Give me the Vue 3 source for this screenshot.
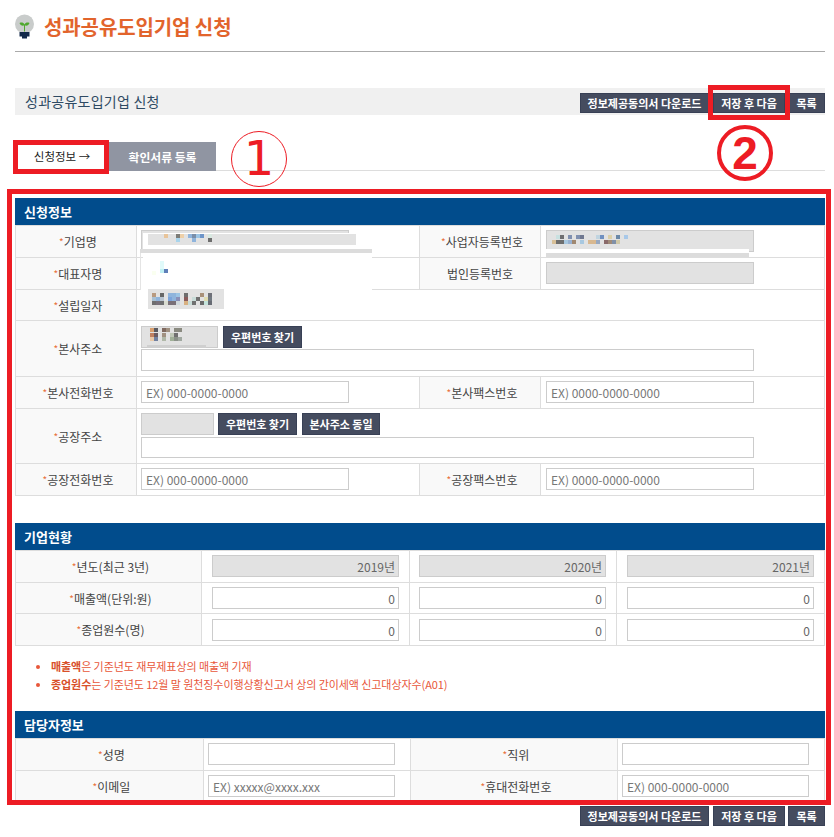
<script setup>
const mosaic = [
  // company name
  [164,234,'#e8c49a'],[176,234,'#7d7d78'],[180,234,'#eed0a8'],[188,234,'#8fb4dc'],[192,234,'#7a8ea8'],[196,234,'#9cc4e4'],[200,234,'#6e95c8'],[208,234,'#d8e8e0'],
  [176,238,'#a8d4ec'],[192,238,'#8fb4dc'],[208,238,'#6e6e6e'],
  // representative
  [160,261,'#e0fafa'],[160,265,'#e0fafa'],[160,269,'#c0f0f4'],[164,269,'#5f7fb8'],[152,271,'#fafff0'],
  // founding date
  [152,293,'#b89a80'],[160,293,'#666666'],[168,293,'#8fb4dc'],[172,293,'#8fb4dc'],[176,293,'#9cc4e4'],[184,293,'#6e6e6e'],[200,293,'#a89078'],[208,293,'#6e7078'],
  [152,297,'#a8c0d4'],[156,297,'#8fb4dc'],[160,297,'#b8c4d0'],[168,297,'#7ba4dc'],[172,297,'#8fb4dc'],[176,297,'#8a8fb8'],[184,297,'#8a5a5a'],[192,297,'#c8dcd8'],[196,297,'#707070'],[204,297,'#e0dcb0'],[208,297,'#707880'],
  [152,301,'#6e6e70'],[156,301,'#77707a'],[160,301,'#6e6e70'],[164,301,'#d8dcd0'],[168,301,'#7a7078'],[172,301,'#7a7078'],[176,301,'#d0d8dc'],[184,301,'#d8b080'],[188,301,'#c8dcd8'],[192,301,'#707070'],[200,301,'#6a6a6a'],[204,301,'#c4e4dc'],[208,301,'#686c74'],
  // business number
  [556,235,'#c8e0e0'],[560,235,'#6e6e70'],[568,235,'#8090b0'],[576,235,'#8090b0'],[580,235,'#707890'],[596,235,'#c0d4e0'],[600,235,'#7090c0'],[608,235,'#dcd0a8'],[616,235,'#6a88a8'],[624,235,'#a8c8e8'],
  [552,240,'#d8c098'],[556,240,'#6e6e6e'],[560,240,'#6e6e6e'],[564,240,'#a8c8e0'],[568,240,'#98b0d0'],[572,240,'#a08870'],[580,240,'#a8c8e0'],[588,240,'#d8b890'],[592,240,'#d8b890'],[596,240,'#98a8c0'],[604,240,'#8a6a6a'],[608,240,'#a08a78'],[612,240,'#8090a8'],[616,240,'#d0c8a8'],
  // zip
  [150,328,'#d8a070'],[154,328,'#5a5a60'],[162,328,'#806a60'],[166,328,'#a09080'],[174,328,'#8a8a80'],[178,328,'#8a8a80'],
  [150,333,'#c08060'],[154,333,'#6a5a60'],[162,333,'#a09080'],[170,333,'#c0c8b8'],[174,333,'#707070'],
  [150,337,'#e8c8a8'],[154,337,'#7080a0'],[162,337,'#b0b8a8'],[170,337,'#a0b098'],[174,337,'#8a9088'],[178,337,'#a0a8a0'],
]
</script>

<template>
  <div class="page">
    <header class="title-row">
      <svg class="bulb" width="22" height="26" viewBox="0 0 22 26">
        <g transform="translate(-1 0)">
          <circle cx="10.5" cy="10" r="9.5" fill="#c9cccb" />
          <path d="M6 17h9v3H6z" fill="#c9cccb" />
          <path d="M5.5 9c2 -1 4 -.5 5 1.5c1 -2 3 -2.5 5 -1.5c-.5 2 -2.5 3 -4.500 2.500v6h-1v-6c-2 .5 -4 -.5 -4.500 -2.500z" fill="#4fa82e" />
          <path d="M5.500 18h10v4.500h-2.500v2h-5v-2h-2.500z" fill="#12294a" />
        </g>
      </svg>
      <h1>성과공유도입기업 신청</h1>
    </header>

    <div class="bar">
      <span class="bar-title">성과공유도입기업 신청</span>
      <div class="actions">
        <button class="btn w1">정보제공동의서 다운로드</button>
        <button class="btn w2">저장 후 다음</button>
        <button class="btn w3">목록</button>
      </div>
    </div>

    <nav class="tabs">
      <span class="tab on">신청정보 →</span>
      <span class="tab off">확인서류 등록</span>
    </nav>

    <h2 class="sec first">신청정보</h2>
    <div class="grid g1">
      <div class="lb"><i>*</i>기업명</div>
      <div class="vl"><input class="f w208 ro" readonly /></div>
      <div class="lb"><i>*</i>사업자등록번호</div>
      <div class="vl r"><input class="f w208 ro" readonly /></div>

      <div class="lb"><i>*</i>대표자명</div>
      <div class="vl"></div>
      <div class="lb">법인등록번호</div>
      <div class="vl r"><input class="f w208 ro" readonly /></div>

      <div class="lb"><i>*</i>설립일자</div>
      <div class="vl span3"></div>

      <div class="lb"><i>*</i>본사주소</div>
      <div class="vl span3 addr">
        <div class="line">
          <input class="f w77 ro" readonly />
          <button class="btn fb">우편번호 찾기</button>
        </div>
        <input class="f w613" />
      </div>

      <div class="lb"><i>*</i>본사전화번호</div>
      <div class="vl"><input class="f w208" placeholder="EX) 000-0000-0000" /></div>
      <div class="lb"><i>*</i>본사팩스번호</div>
      <div class="vl r"><input class="f w208" placeholder="EX) 0000-0000-0000" /></div>

      <div class="lb"><i>*</i>공장주소</div>
      <div class="vl span3 addr addr2">
        <div class="line">
          <input class="f w73 ro" readonly />
          <button class="btn fb">우편번호 찾기</button>
          <button class="btn fb2">본사주소 동일</button>
        </div>
        <input class="f w613 short" />
      </div>

      <div class="lb"><i>*</i>공장전화번호</div>
      <div class="vl"><input class="f w208" placeholder="EX) 000-0000-0000" /></div>
      <div class="lb"><i>*</i>공장팩스번호</div>
      <div class="vl r"><input class="f w208" placeholder="EX) 0000-0000-0000" /></div>
    </div>

    <h2 class="sec second">기업현황</h2>
    <div class="grid g2">
      <div class="lb"><i>*</i>년도(최근 3년)</div>
      <div class="vc"><input class="f w187 ro num" readonly value="2019년" /></div>
      <div class="vc"><input class="f w187 ro num" readonly value="2020년" /></div>
      <div class="vc"><input class="f w187 ro num" readonly value="2021년" /></div>

      <div class="lb"><i>*</i>매출액(단위:원)</div>
      <div class="vc"><input class="f w187 num" value="0" /></div>
      <div class="vc"><input class="f w187 num" value="0" /></div>
      <div class="vc"><input class="f w187 num" value="0" /></div>

      <div class="lb"><i>*</i>종업원수(명)</div>
      <div class="vc"><input class="f w187 num" value="0" /></div>
      <div class="vc"><input class="f w187 num" value="0" /></div>
      <div class="vc"><input class="f w187 num" value="0" /></div>
    </div>

    <ul class="notes">
      <li><b>매출액</b>은 기준년도 재무제표상의 <b class="soft">매출액</b> 기재</li>
      <li><b>종업원수</b>는 기준년도 12월 말 원천징수이행상황신고서 상의 간이세액 신고대상자수(A01)</li>
    </ul>

    <h2 class="sec">담당자정보</h2>
    <div class="grid g3">
      <div class="lb"><i>*</i>성명</div>
      <div class="vl"><input class="f w187" /></div>
      <div class="lb"><i>*</i>직위</div>
      <div class="vl"><input class="f w187" /></div>

      <div class="lb"><i>*</i>이메일</div>
      <div class="vl"><input class="f w187" placeholder="EX) xxxxx@xxxx.xxx" /></div>
      <div class="lb"><i>*</i>휴대전화번호</div>
      <div class="vl"><input class="f w187" placeholder="EX) 000-0000-0000" /></div>
    </div>

    <div class="actions bottom">
      <button class="btn w1">정보제공동의서 다운로드</button>
      <button class="btn w2">저장 후 다음</button>
      <button class="btn w3">목록</button>
    </div>

    <!-- blurred-out personal data painted over the form -->
    <svg class="redact" width="834" height="837" viewBox="0 0 834 837">
      <rect x="143" y="233" width="229" height="57" fill="#fff" />
      <rect x="148" y="234" width="208" height="11" fill="#e2e2e2" />
      <rect x="140" y="249" width="232" height="4" fill="#dcdcdc" />
      <rect x="140" y="253" width="1" height="37" fill="#e4e4e4" />
      <rect x="141" y="289" width="7" height="24" fill="#fff" />
      <rect x="148" y="289" width="76" height="20" fill="#e2e2e2" />
      <rect x="546" y="249" width="203" height="4" fill="#fff" />
      <rect x="546" y="253" width="203" height="4" fill="#dcdcdc" />
      <rect x="147" y="345" width="59" height="3" fill="#cfcfcf" />
      <rect v-for="(m, i) in mosaic" :key="i" :x="m[0]" :y="m[1]" width="4" height="4" :fill="m[2]" />
    </svg>

    <!-- annotations -->
    <div class="mark m-tab"></div>
    <div class="mark m-save"></div>
    <div class="mark m-form"></div>
    <div class="num-mark one">1</div>
    <div class="num-mark two">2</div>
  </div>
</template>

<style scoped>
.page {
  position: relative;
  width: 810px;
  height: 837px;
  padding: 0 9px 0 15px;
  overflow: hidden;
  font-family: "Noto Sans CJK KR", "Noto Sans", sans-serif;
  font-size: 12px;
  color: #444;
}
.title-row {
  display: flex;
  align-items: center;
  height: 51px;
  padding-top: 3px;
  box-sizing: border-box;
  box-shadow: 0 1px 0 #aaa;
}
.bulb { margin-right: 7px; }
h1 {
  margin: 0;
  font-size: 20px;
  font-weight: 700;
  color: #e2642c;
  line-height: 24px;
  letter-spacing: -0.1px;
}
.bar {
  display: flex;
  justify-content: space-between;
  align-items: flex-end;
  height: 27px;
  margin-top: 37px;
  background: #f0f0f0;
}
.bar-title {
  align-self: center;
  padding: 0 0 2px 10px;
  font-size: 14px;
  letter-spacing: 0.25px;
  color: #2e4a63;
}
.actions { display: flex; padding-bottom: 2px; }
.btn {
  height: 20px;
  padding: 0;
  border: 1px solid #384055;
  background: #454c5f;
  color: #fff;
  font: 700 11px/18px "Noto Sans CJK KR", sans-serif;
  white-space: nowrap;
}
.w1 { width: 129px; margin-right: 4px; }
.w2 { width: 72px; margin-right: 3px; }
.w3 { width: 37px; }
.tabs {
  display: flex;
  height: 28px;
  margin-top: 27px;
  border-bottom: 1px solid #ddd;
}
.tab {
  display: flex;
  align-items: center;
  justify-content: center;
}
.on { width: 94px; color: #222; font-size: 11.500px; }
.off { width: 107px; height: 29px; background: #9095a2; color: #fff; font-size: 11.800px; font-weight: 700; }
.sec {
  margin: 0;
  height: 27px;
  padding-left: 9px;
  background: #014c8c;
  color: #fff;
  font-size: 13px;
  font-weight: 700;
  line-height: 27px;
}
.first, .second { margin-top: 27px; }
.grid {
  display: grid;
  gap: 1px;
  border: 1px solid #ddd;
  background: #ddd;
}
.g1 {
  grid-template-columns: 120px 282px 120px 283px;
  grid-template-rows: 31px 31px 30px 55px 31px 54px 31px;
}
.g2 {
  grid-template-columns: 185px 207px 206px 207px;
  grid-template-rows: 31px 30px 31px;
}
.g3 {
  grid-template-columns: 187px 206px 206px 206px;
  grid-template-rows: 31px 31px;
}
.lb {
  display: flex;
  align-items: center;
  justify-content: center;
  background: #f9f9f9;
  color: #444;
  font-size: 12px;
}
.lb i {
  margin-left: 4px;
  font-size: 10px;
  font-style: normal;
  color: #e8703a;
}
.vl {
  display: flex;
  align-items: flex-start;
  padding: 4px 0 0 4px;
  background: #fff;
}
.vl.r { padding-left: 5px; }
.vc {
  display: flex;
  align-items: flex-start;
  justify-content: center;
  padding-top: 4px;
  background: #fff;
}
.vc:nth-child(4n + 3) { padding-right: 1px; }
.g2 .vc:nth-child(n + 10) { padding-top: 5px; }
.span3 { grid-column: span 3; }
.addr {
  flex-direction: column;
  align-items: flex-start;
  gap: 1px;
  padding-top: 5px;
}
.addr2 { gap: 2px; padding-top: 4px; }
.line { display: flex; align-items: center; gap: 5px; }
.f {
  box-sizing: border-box;
  height: 22px;
  padding: 0 4px;
  border: 1px solid #ccc;
  background: #fff;
  color: #666;
  font: 12px "Noto Sans CJK KR", sans-serif;
  outline: none;
}
.f::placeholder { color: #777; opacity: 1; }
.ro { background: #e2e2e2; }
.num { text-align: right; padding-right: 3px; }
.w208 { width: 208px; }
.w187 { width: 187px; }
.w77 { width: 77px; }
.w73 { width: 73px; margin-right: -1px; }
.w613 { width: 613px; }
.short { height: 21px; }
.fb { width: 79px; height: 22px; }
.fb2 { width: 78px; height: 22px; }
.notes {
  height: 36px;
  margin: 11px 0 18px;
  padding: 0 0 0 36px;
  font-size: 11px;
  line-height: 18px;
  letter-spacing: -0.07px;
  color: #e8573a;
}
.notes b { color: #d8502a; }
.notes b.soft { font-weight: 400; color: #e8573a; }
.bottom { justify-content: flex-end; margin-top: 3px; padding: 0; }
.redact {
  position: absolute;
  left: 0;
  top: 0;
  pointer-events: none;
}
.mark {
  position: absolute;
  box-sizing: border-box;
  border: 5px solid #ed1c24;
  pointer-events: none;
}
.m-tab { left: 13px; top: 140px; width: 96px; height: 34px; }
.m-save { left: 708px; top: 85px; width: 82px; height: 35px; }
.m-form { left: 7px; top: 189px; width: 824px; height: 616px; }
.num-mark {
  position: absolute;
  box-sizing: border-box;
  width: 56px;
  height: 56px;
  border-radius: 50%;
  border: 1.500px solid #ed1c24;
  color: #ed1c24;
  text-align: center;
}
.one {
  left: 231px;
  top: 131px;
  font: 400 48px/52px "DejaVu Sans", sans-serif;
}
.two {
  left: 717px;
  top: 125px;
  border-width: 4px;
  font: 700 46px/48px "Liberation Sans", sans-serif;
}
</style>

<style>
html, body { margin: 0; background: #fff; }
</style>
